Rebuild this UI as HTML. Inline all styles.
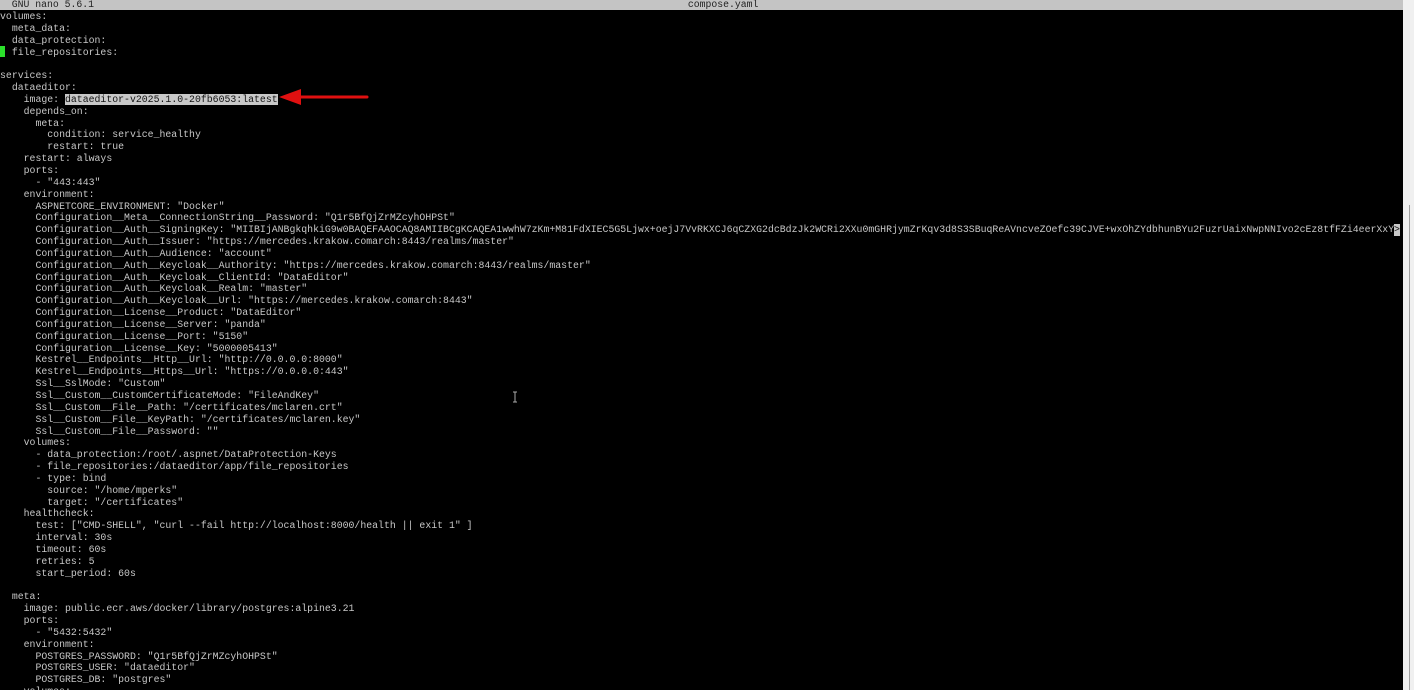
<!DOCTYPE html>
<html><head><meta charset="utf-8"><style>
html,body{margin:0;padding:0;background:#000;width:1414px;height:690px;overflow:hidden;position:relative}
#bar{position:absolute;left:0;top:0;width:1403px;height:10px;background:#c4c4c4;font:9.8px/10px "Liberation Mono",monospace;color:#222;white-space:pre}
#sb{position:absolute;left:1403px;top:0;width:11px;height:690px;background:#f0f0f0}
#sbl{position:absolute;left:1409px;top:205px;width:1px;height:485px;background:#a0a0a0}
pre{position:absolute;left:0;top:11px;margin:0;width:1394px;overflow:hidden;font:9.85px/11.84px "Liberation Mono",monospace;color:#c8c8c8}
.hl{background:#c8c8c8;color:#111}
#cur{position:absolute;left:0;top:46px;width:5px;height:11px;background:#2be02b}
#gt{position:absolute;left:1394px;top:224px;width:6px;height:12px;background:#c8c8c8;color:#111;font:9.85px/12px "Liberation Mono",monospace}
</style></head><body>
<div id="bar">  GNU nano 5.6.1                                                                                                     compose.yaml</div>
<div id="sb"></div><div id="sbl"></div>
<pre>volumes:
  meta_data:
  data_protection:
  file_repositories:

services:
  dataeditor:
    image: <span class="hl">dataeditor-v2025.1.0-20fb6053:latest</span>
    depends_on:
      meta:
        condition: service_healthy
        restart: true
    restart: always
    ports:
      - "443:443"
    environment:
      ASPNETCORE_ENVIRONMENT: "Docker"
      Configuration__Meta__ConnectionString__Password: "Q1r5BfQjZrMZcyhOHPSt"
      Configuration__Auth__SigningKey: "MIIBIjANBgkqhkiG9w0BAQEFAAOCAQ8AMIIBCgKCAQEA1wwhW7zKm+M81FdXIEC5G5Ljwx+oejJ7VvRKXCJ6qCZXG2dcBdzJk2WCRi2XXu0mGHRjymZrKqv3d8S3SBuqReAVncveZOefc39CJVE+wxOhZYdbhunBYu2FuzrUaixNwpNNIvo2cEz8tfFZi4eerXxY
      Configuration__Auth__Issuer: "https://mercedes.krakow.comarch:8443/realms/master"
      Configuration__Auth__Audience: "account"
      Configuration__Auth__Keycloak__Authority: "https://mercedes.krakow.comarch:8443/realms/master"
      Configuration__Auth__Keycloak__ClientId: "DataEditor"
      Configuration__Auth__Keycloak__Realm: "master"
      Configuration__Auth__Keycloak__Url: "https://mercedes.krakow.comarch:8443"
      Configuration__License__Product: "DataEditor"
      Configuration__License__Server: "panda"
      Configuration__License__Port: "5150"
      Configuration__License__Key: "5000005413"
      Kestrel__Endpoints__Http__Url: "http://0.0.0.0:8000"
      Kestrel__Endpoints__Https__Url: "https://0.0.0.0:443"
      Ssl__SslMode: "Custom"
      Ssl__Custom__CustomCertificateMode: "FileAndKey"
      Ssl__Custom__File__Path: "/certificates/mclaren.crt"
      Ssl__Custom__File__KeyPath: "/certificates/mclaren.key"
      Ssl__Custom__File__Password: ""
    volumes:
      - data_protection:/root/.aspnet/DataProtection-Keys
      - file_repositories:/dataeditor/app/file_repositories
      - type: bind
        source: "/home/mperks"
        target: "/certificates"
    healthcheck:
      test: ["CMD-SHELL", "curl --fail http://localhost:8000/health || exit 1" ]
      interval: 30s
      timeout: 60s
      retries: 5
      start_period: 60s

  meta:
    image: public.ecr.aws/docker/library/postgres:alpine3.21
    ports:
      - "5432:5432"
    environment:
      POSTGRES_PASSWORD: "Q1r5BfQjZrMZcyhOHPSt"
      POSTGRES_USER: "dataeditor"
      POSTGRES_DB: "postgres"
    volumes:
</pre>
<div id="gt">&gt;</div>
<div id="cur"></div>
<svg style="position:absolute;left:0;top:0" width="1414" height="690">
<line x1="298" y1="97" x2="367" y2="97" stroke="#e01010" stroke-width="3" stroke-linecap="round"/>
<polygon points="279,97 301,89 301,105" fill="#e01010"/>
<path d="M513 392h4M515 392v10M513 402h4" stroke="#aaa" stroke-width="1" fill="none"/>
</svg>
</body></html>
